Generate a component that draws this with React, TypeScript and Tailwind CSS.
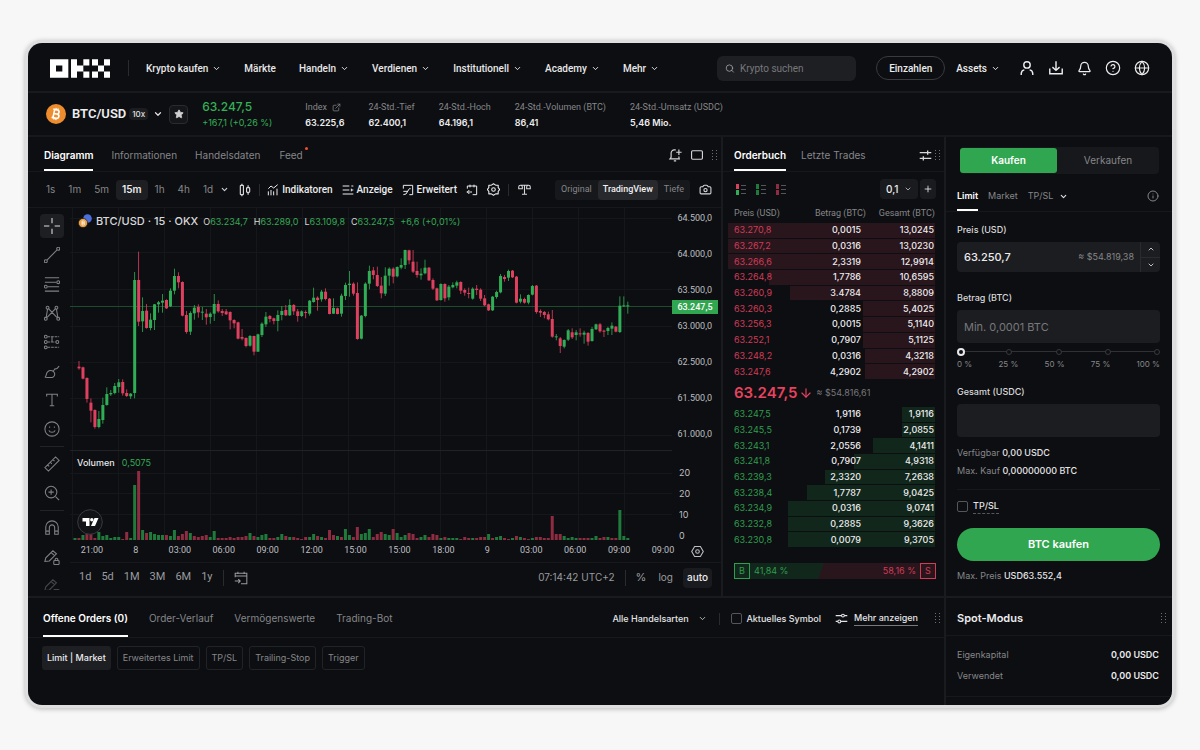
import React, { useState } from 'react';
import { ArrowDown, Bell, Camera, ChevronDown, ChevronUp, CircleHelp, ExternalLink, Globe, Info, Plus, Search, Star } from 'lucide-react';

type Candle = [open: number, close: number, high: number, low: number];

const NAV = [
  { label: 'Krypto kaufen', menu: true },
  { label: 'Märkte', menu: false },
  { label: 'Handeln', menu: true },
  { label: 'Verdienen', menu: true },
  { label: 'Institutionell', menu: true },
  { label: 'Academy', menu: true },
  { label: 'Mehr', menu: true },
];

const STATS = [
  { label: 'Index', value: '63.225,6', link: true },
  { label: '24-Std.-Tief', value: '62.400,1' },
  { label: '24-Std.-Hoch', value: '64.196,1' },
  { label: '24-Std.-Volumen (BTC)', value: '86,41' },
  { label: '24-Std.-Umsatz (USDC)', value: '5,46 Mio.' },
];

const ASKS = [
  ['63.270,8', '0,0015', '13,0245', 100],
  ['63.267,2', '0,0316', '13,0230', 100],
  ['63.266,6', '2,3319', '12,9914', 100],
  ['63.264,8', '1,7786', '10,6595', 80],
  ['63.260,9', '3.4784', '8,8809', 70],
  ['63.260,3', '0,2885', '5,4025', 35],
  ['63.256,3', '0,0015', '5,1140', 35],
  ['63.252,1', '0,7907', '5,1125', 35],
  ['63.248,2', '0,0316', '4,3218', 34],
  ['63.247,6', '4,2902', '4,2902', 34],
] as const;

const BIDS = [
  ['63.247,5', '1,9116', '1,9116', 16],
  ['63.245,5', '0,1739', '2,0855', 16],
  ['63.243,1', '2,0556', '4,1411', 30],
  ['63.241,8', '0,7907', '4,9318', 39],
  ['63.239,3', '2,3320', '7,2638', 53],
  ['63.238,4', '1,7787', '9,0425', 62],
  ['63.234,9', '0,0316', '9,0741', 71],
  ['63.232,8', '0,2885', '9,3626', 71],
  ['63.230,8', '0,0079', '9,3705', 71],
] as const;

// open, close, high, low as distances from the top of the price pane (a third of a pixel each)
const CANDLES: Candle[] = [
  [395, 400, 378, 404], [397, 431, 395, 433], [429, 492, 427, 503], [503, 527, 490, 562], [525, 576, 523, 581],
  [576, 552, 528, 580], [555, 510, 488, 566], [510, 477, 457, 512], [478, 474, 465, 483], [474, 453, 444, 478],
  [456, 442, 432, 473], [441, 475, 433, 482], [474, 483, 463, 486], [484, 476, 474, 492], [474, 135, 111, 490],
  [135, 260, 50, 273], [259, 228, 187, 291], [227, 279, 207, 281], [279, 254, 235, 286], [255, 208, 207, 285],
  [208, 202, 198, 233], [203, 197, 177, 233], [195, 220, 193, 222], [214, 167, 160, 216], [167, 123, 101, 178],
  [123, 142, 112, 160], [141, 242, 139, 244], [240, 291, 228, 296], [290, 234, 229, 300], [235, 218, 210, 254],
  [216, 232, 208, 248], [232, 230, 216, 255], [236, 247, 222, 269], [246, 236, 232, 266], [236, 207, 177, 258],
  [207, 229, 196, 233], [228, 234, 222, 243], [229, 238, 222, 240], [231, 256, 229, 283], [255, 265, 253, 280],
  [262, 311, 260, 313], [306, 311, 282, 316], [309, 333, 307, 337], [332, 303, 300, 335], [303, 350, 302, 361],
  [350, 298, 296, 351], [300, 266, 262, 306], [268, 245, 231, 276], [243, 252, 240, 262], [250, 258, 248, 268],
  [258, 240, 226, 289], [240, 228, 213, 256], [225, 241, 210, 243], [241, 210, 193, 243], [210, 229, 207, 240],
  [229, 243, 222, 260], [243, 229, 226, 246], [231, 234, 226, 250], [236, 197, 195, 242], [201, 188, 158, 203],
  [188, 195, 184, 227], [193, 170, 165, 200], [170, 192, 160, 196], [191, 237, 189, 238], [236, 219, 190, 237],
  [220, 237, 218, 238], [236, 182, 176, 245], [183, 150, 143, 195], [150, 146, 108, 185], [146, 176, 142, 182],
  [174, 312, 142, 314], [311, 242, 240, 313], [243, 146, 142, 247], [146, 108, 92, 163], [106, 120, 96, 133],
  [120, 153, 95, 156], [152, 175, 126, 190], [176, 122, 97, 183], [122, 101, 97, 152], [101, 125, 97, 145],
  [124, 96, 94, 127], [98, 90, 70, 103], [90, 45, 44, 102], [46, 76, 44, 88], [80, 110, 45, 114],
  [108, 120, 80, 128], [121, 116, 100, 134], [115, 98, 74, 118], [98, 136, 96, 138], [135, 161, 130, 165],
  [160, 196, 158, 198], [195, 147, 145, 197], [147, 190, 145, 200], [187, 155, 150, 196], [157, 150, 142, 160],
  [152, 142, 137, 160], [141, 167, 139, 177], [165, 173, 160, 182], [174, 176, 158, 190], [191, 161, 157, 194],
  [161, 165, 150, 180], [164, 191, 160, 198], [190, 211, 180, 213], [208, 226, 206, 228], [226, 185, 183, 228],
  [186, 171, 167, 191], [172, 123, 117, 175], [126, 132, 120, 140], [128, 108, 104, 138], [107, 127, 105, 129],
  [125, 203, 123, 205], [200, 191, 178, 205], [192, 203, 188, 206], [203, 180, 178, 208], [179, 153, 150, 181],
  [152, 231, 150, 236], [228, 233, 223, 246], [231, 240, 228, 250], [238, 253, 230, 256], [252, 305, 225, 308],
  [307, 304, 297, 316], [310, 333, 306, 354], [335, 315, 313, 340], [314, 286, 282, 318], [292, 307, 280, 312],
  [300, 292, 285, 316], [295, 297, 280, 305], [299, 293, 287, 326], [294, 320, 291, 332], [318, 282, 276, 320],
  [283, 268, 266, 285], [268, 289, 264, 293], [287, 290, 284, 306], [288, 279, 275, 300], [281, 272, 262, 300],
  [275, 290, 273, 292], [291, 212, 184, 294], [214, 211, 184, 216], [214, 211, 200, 236],
];

// negative = falling bar
const VOLUMES = [
  2, -2, 5, -6, -6, -2, 8, 4, 5, 2, 3, 3, -1, -8, 2, 55, -69, 10, -7, 8,
  6, 5, 5, -5, 4, 10, -4, -6, -9, 7, -4, -3, -4, -5, 3, 9, -2, -2, -2, -3,
  -2, -3, -3, -4, 7, -4, 3, 5, 6, -2, -2, 3, 6, -4, 3, -3, -2, -1, -3, 3,
  6, -4, 3, -2, -10, -5, 4, -3, 11, 5, -3, -13, 6, 7, 11, -3, -6, -8, 6, 5,
  -11, 7, 3, 5, -7, -6, -2, 3, 5, -3, -6, -5, 2, -3, 2, 2, 2, -1, -3, -2,
  2, -2, -3, -3, 6, -2, 3, 4, -2, -1, 2, -4, 3, -2, -1, 2, -3, -3, -2, -2,
  -24, -6, -6, 4, 2, 3, 2, -2, -2, -2, 2, 4, -2, -3, 3, -2, -2, 30, 4, 2,
];

const PRICE_TICKS = ['64.500,0', '64.000,0', '63.500,0', '63.000,0', '62.500,0', '61.500,0', '61.000,0'];
const TIME_TICKS = ['21:00', '8', '03:00', '06:00', '09:00', '12:00', '15:00', '15:00', '18:00', '9', '03:00', '06:00', '09:00', '09:00'];

const BAR_STEP = 3.977;

interface IconProps {
  size?: number;
  weight?: number;
  children: React.ReactNode;
}

const Icon = ({ size = 16, weight = 1.5, children }: IconProps) => (
  <svg
    width={size}
    height={size}
    viewBox="0 0 18 18"
    fill="none"
    stroke="currentColor"
    strokeWidth={weight}
    className="shrink-0"
    aria-hidden="true"
  >
    {children}
  </svg>
);

const DragDots = () => (
  <svg width="5" height="11" viewBox="0 0 5 11" fill="#6b6d72" className="shrink-0" aria-hidden="true">
    {[0, 3, 6, 9].map(y => (
      <g key={y}>
        <rect x="0" y={y} width="1" height="1" />
        <rect x="4" y={y} width="1" height="1" />
      </g>
    ))}
  </svg>
);

const Logo = () => (
  <svg width="60" height="19" viewBox="0 0 180 56" fill="#fff" role="img" aria-label="OKX">
    <path fillRule="evenodd" d="M0 0h55v56H0zM18 19v18h19V19z" />
    <path d="M63 0h18v19h19v18H81v19H63zM100 0h18v19h-18zM100 37h18v19h-18z" />
    <path d="M126 0h18v19h-18zM162 0h18v19h-18zM144 19h18v18h-18zM126 37h18v19h-18zM162 37h18v19h-18z" />
  </svg>
);

const BitcoinBadge = () => (
  <svg width="20" height="20" viewBox="0 0 20 20" aria-hidden="true" className="shrink-0">
    <circle cx="10" cy="10" r="10" fill="#ee8d2d" />
    <g fill="none" stroke="#fff" strokeWidth="1.6" transform="rotate(12 10 10)">
      <path d="M7.8 5.8v8.4M6.4 5.8h4.2a2 2 0 0 1 0 4.1H7.8M10.6 9.9h.6a2.15 2.15 0 0 1 0 4.3H6.4" />
      <path d="M9 4v2M11 4v2M9 14v2M11 14v2" strokeWidth="1.1" />
    </g>
  </svg>
);

const Header = () => (
  <header className="flex h-[50px] items-center border-b-2 border-[#191a1e] px-[22px] pt-[2px] font-['Roboto','Liberation_Sans',sans-serif]">
    <a href="#home"><Logo /></a>
    <span className="ml-[18px] mr-[17px] h-4 w-px bg-[#2a2b2f]" />
    <nav className="flex items-center gap-[23px] whitespace-nowrap text-[10px] font-medium text-[#e8e8ea]">
      {NAV.map(item => (
        <a key={item.label} href="#nav" className="flex items-center gap-1">
          {item.label}
          {item.menu && <ChevronDown size={9} strokeWidth={2.5} />}
        </a>
      ))}
    </nav>
    <label className="ml-auto flex h-[25px] w-[139px] items-center gap-[5px] rounded-md bg-[#1e1f22] px-2 text-[#a5a6aa]">
      <Search size={11} />
      <input
        type="search"
        aria-label="Suche"
        placeholder="Krypto suchen"
        className="w-full min-w-0 bg-transparent text-[10px] outline-none placeholder:text-[#77787c]"
      />
    </label>
    <button className="ml-5 h-6 w-[69px] rounded-full border border-[#3a3b3f] text-[10px] font-medium text-[#ececee]">Einzahlen</button>
    <button className="ml-[11px] flex items-center gap-1 text-[10px] font-medium text-[#ececee]">
      Assets <ChevronDown size={9} strokeWidth={2.5} />
    </button>
    <div className="ml-[19px] flex items-center gap-[13px] text-[#ececee]">
      <button aria-label="Konto">
        <Icon weight={1.6}><circle cx="9" cy="5.5" r="3.6" /><path d="M2.5 17v-1.5a4.5 4.5 0 0 1 3.5-4.4M15.5 17v-1.5a4.5 4.5 0 0 0-3.5-4.4" /></Icon>
      </button>
      <button aria-label="Download">
        <Icon weight={1.6}><path d="M9 1.5v10M5 8l4 3.7L13 8M2 9.5v6h14v-6" /></Icon>
      </button>
      <button aria-label="Benachrichtigungen"><Bell size={15} strokeWidth={2} /></button>
      <button aria-label="Hilfe"><CircleHelp size={16} strokeWidth={1.8} /></button>
      <button aria-label="Sprache"><Globe size={16} strokeWidth={1.8} /></button>
    </div>
  </header>
);

const Ticker = () => (
  <section className="flex h-11 items-center whitespace-nowrap border-b-2 border-[#17181c] pl-[18px]">
    <BitcoinBadge />
    <h1 className="ml-[6px] font-['Roboto','Liberation_Sans',sans-serif] text-[13px] font-semibold text-[#ededef]">BTC/USD</h1>
    <span className="ml-[3px] rounded-sm bg-[#1c1d20] px-[3px] text-[8px] font-medium leading-3 text-[#e0e0e2]">10x</span>
    <button aria-label="Paar wählen" className="ml-[5px] text-[#e0e0e2]"><ChevronDown size={10} strokeWidth={3} /></button>
    <button aria-label="Favorit" className="ml-[6px] flex size-[19px] items-center justify-center rounded border border-[#2a2b2f] bg-[#151619] text-[#d0d0d2]">
      <Star size={10} fill="currentColor" />
    </button>
    <div className="ml-[14px] w-[103px] pt-px text-[#35b057]">
      <div className="text-[12px] font-medium leading-4">63.247,5</div>
      <div className="text-[9px] leading-4">+167,1 (+0,26 %)</div>
    </div>
    <dl className="flex gap-6 pt-[2px] text-[9px] leading-4">
      {STATS.map(stat => (
        <div key={stat.label}>
          <dt className="flex items-center gap-[5px] font-['Roboto','Liberation_Sans',sans-serif] text-[#85868a]">
            {stat.label}
            {stat.link && <ExternalLink size={9} />}
          </dt>
          <dd className="font-semibold text-[#ececee]">{stat.value}</dd>
        </div>
      ))}
    </dl>
  </section>
);

const ChartTabs = () => (
  <div className="flex h-[35px] items-stretch border-b border-[#17181c] pl-4 pr-1 text-[10px] text-[#85868a]">
    <button className="border-b-2 border-white pt-1 font-semibold text-white">Diagramm</button>
    <button className="ml-[18px] pt-[2px]">Informationen</button>
    <button className="ml-[18px] pt-[2px]">Handelsdaten</button>
    <button className="relative ml-[19px] pt-[2px]">
      Feed
      <span className="absolute -right-[5px] top-[10px] size-[3px] rounded-full bg-[#f04a35]" />
    </button>
    <div className="ml-auto flex items-center gap-2 pt-[2px] text-[#d5d5d8]">
      <button aria-label="Alarm">
        <Icon size={14}><path d="M10 2.5H8a4 4 0 0 0-4 4V12l-1.5 2h12L14 12v-1M7.5 16.5h3M14 2v7M10.500 5.500h7" /></Icon>
      </button>
      <button aria-label="Vollbild">
        <Icon size={14}><rect x="2" y="3.5" width="14" height="11" rx="1.5" /></Icon>
      </button>
      <DragDots />
    </div>
  </div>
);

const ChartToolbar = () => {
  const [interval, setActiveInterval] = useState('15m');
  const [mode, setMode] = useState('TradingView');

  return (
    <div className="flex h-9 items-center whitespace-nowrap border-b border-[#17181c] pl-3 pr-[9px] text-[10px] text-[#85868a]">
      <div className="flex gap-px">
        {['1s', '1m', '5m', '15m', '1h', '4h', '1d'].map(item => (
          <button
            key={item}
            onClick={() => setActiveInterval(item)}
            className={item === interval ? 'h-5 rounded-sm bg-[#1e1f22] px-[6px] font-semibold text-[#ececee]' : 'h-5 px-[6px]'}
          >
            {item}
          </button>
        ))}
      </div>
      <button aria-label="Weitere Intervalle" className="ml-px text-[#d0d0d2]"><ChevronDown size={9} strokeWidth={3} /></button>
      <button aria-label="Kerzen" className="ml-[9px] text-[#d8d8da]">
        <Icon size={14}><rect x="3" y="3" width="4" height="12" rx="1" /><path d="M5 1v2M5 15v2M13 3v3M13 12v3" /><rect x="11" y="6" width="4" height="6" rx="1" /></Icon>
      </button>
      <span className="mx-[7px] h-3 w-px bg-[#2a2b2f]" />
      <div className="flex items-center gap-[9px] font-['Roboto','Liberation_Sans',sans-serif] font-medium text-[#ececee]">
        <button className="flex items-center gap-[3px]">
          <Icon size={12}><path d="M2 7l4-4 4 3 6-5M2 11v6M6 9v8M10 11v6M15 7v10" /></Icon>
          Indikatoren
        </button>
        <button className="flex items-center gap-[3px]">
          <Icon size={12}><path d="M1 3h10M1 9h10M1 15h16M14 3h3M14 9h3M14 7v4" /></Icon>
          Anzeige
        </button>
        <button className="flex items-center gap-[3px]">
          <Icon size={12}><path d="M2 7V2h14v14h-5M2 16l4-1 5-8h2M2 11h7" /></Icon>
          Erweitert
        </button>
        <button aria-label="Replay">
          <Icon size={12}><path d="M2 7V3h14v13h-6M6 1v4M12 1v4M9 12H1M5 9l-3 3 3 3" /></Icon>
        </button>
        <button aria-label="Einstellungen">
          <Icon size={13}><path d="M9 1l3 2h3.5v3.5L17.5 9l-2 2.5V15H12l-3 2-3-2H2.5v-3.5L.5 9l2-2.5V3H6z" strokeLinejoin="round" /><circle cx="9" cy="9" r="2.5" /></Icon>
        </button>
      </div>
      <span className="ml-2 mr-[9px] h-3 w-px bg-[#2a2b2f]" />
      <button aria-label="Vergleichen" className="text-[#d8d8da]">
        <Icon size={13}><path d="M9 3v12M5.5 15.5h7M3 3h12M1 5.5C1 4 2 3 3.5 3S6 4 6 5.500V8H1zM12 5.500C12 4 13 3 14.500 3S17 4 17 5.500V8h-5z" /></Icon>
      </button>
      <div className="ml-auto flex h-5 items-center rounded-[3px] bg-[#17181b] font-['Roboto','Liberation_Sans',sans-serif] text-[9px]">
        {['Original', 'TradingView', 'Tiefe'].map(item => (
          <button
            key={item}
            onClick={() => setMode(item)}
            className={item === mode ? 'h-5 rounded-sm bg-[#28292c] px-[5px] font-medium text-[#f0f0f2]' : 'h-5 px-[6px]'}
          >
            {item}
          </button>
        ))}
      </div>
      <button aria-label="Screenshot" className="ml-[9px] text-[#d8d8da]"><Camera size={13} /></button>
    </div>
  );
};

const TOOLS: { name: string; glyph: React.ReactNode }[] = [
  { name: 'Fadenkreuz', glyph: <path d="M9 0v6M9 12v6M0 9h6M12 9h6" /> },
  { name: 'Trendlinie', glyph: <><path d="M3.3 14.7L14.7 3.3" /><circle cx="2" cy="16" r="1.7" /><circle cx="16" cy="2" r="1.7" /></> },
  { name: 'Fibonacci', glyph: <><path d="M1 2h16M1 7h13M4 12h13M1 17h16" /><circle cx="16" cy="7" r="1.6" /><circle cx="2" cy="12" r="1.6" /></> },
  { name: 'Muster', glyph: <><path d="M2.5 14L4 4.5M5 4l9.5 10M15.5 14L14 4.5M13 4L3.5 14M5 4l4 4 4-4" /><circle cx="4" cy="3" r="1.6" /><circle cx="14" cy="3" r="1.6" /><circle cx="2" cy="15.5" r="1.6" /><circle cx="16" cy="15.5" r="1.6" /></> },
  { name: 'Prognose', glyph: <><path d="M4 3h13M4 9h9M4 15h13" strokeDasharray="3 1" /><circle cx="2" cy="3" r="1.6" /><circle cx="2" cy="9" r="1.6" /><circle cx="2" cy="15" r="1.6" /><circle cx="15" cy="9" r="1.6" /><path d="M9 3v6" /></> },
  { name: 'Pinsel', glyph: <path d="M1 16c2-1 1-4 3-6 2-2 5-2 7 0s1 5-1 6-6 0-9 0zM10.5 9l2-2.5c1 .5 2 .5 4.5-3" /> },
  { name: 'Text', glyph: <path d="M3 5V2.5h12V5M9 2.5v13M6.5 15.5h5" /> },
  { name: 'Emoji', glyph: <><circle cx="9" cy="9" r="8" /><path d="M5.5 10.5c1 3 6 3 7 0M6.3 6.2v1.5M11.7 6.2v1.5" /></> },
  { name: 'Lineal', glyph: <path d="M1 13L13 1l4 4L5 17zM4 10l1.8 1.8M7 7l1.8 1.8M10 4l1.8 1.8" /> },
  { name: 'Zoom', glyph: <><circle cx="8" cy="8" r="6.5" /><path d="M13 13l4 4M8 5v6M5 8h6" /></> },
  { name: 'Magnet', glyph: <path d="M2 16V8a7 7 0 0 1 14 0v8h-4V8.5a3 3 0 0 0-6 0V16zM2 12.5h4M12 12.5h4" /> },
  { name: 'Zeichenmodus', glyph: <><path d="M1 14l1-4 8-8 4 3.5-8 8zM8 4l4 3.5" /><rect x="11" y="13" width="6" height="4.5" rx="1" /><path d="M12.5 13v-1a1.5 1.5 0 0 1 3 0v1" /></> },
  { name: 'Sperren', glyph: <><path d="M1 14l1-4 8-8 4 3.5-8 8zM8 4l4 3.5" /><rect x="11" y="13" width="6" height="4.5" rx="1" /></> },
];

const DrawingTools = () => (
  <div className="flex w-[42px] shrink-0 flex-col items-center gap-[5px] overflow-hidden pl-[6px] pt-[6px] text-[#808185]">
    {TOOLS.map((tool, i) => (
      <React.Fragment key={tool.name}>
        {(i === 8 || i === 10) && <span className="h-px w-6 shrink-0 bg-[#222327]" />}
        <button
          aria-label={tool.name}
          className={
            i === 0
              ? 'flex size-6 shrink-0 items-center justify-center rounded bg-[#1e1f22] text-[#e0e0e2]'
              : i === 12
                ? 'flex h-4 w-6 shrink-0 items-start justify-center overflow-hidden pt-1 opacity-50'
                : 'flex size-6 shrink-0 items-center justify-center'
          }
        >
          <Icon size={16} weight={1.2}>{tool.glyph}</Icon>
        </button>
      </React.Fragment>
    ))}
  </div>
);

const ChartPlot = () => (
  <svg viewBox="0 0 602 332" preserveAspectRatio="none" className="block h-[332px] w-full" aria-label="BTC/USD Kursverlauf">
    <g stroke="#15171a" strokeWidth="1">
      {Array.from({ length: 13 }, (_, i) => (
        <line key={i} x1={2.5 + i * 46} x2={2.5 + i * 46} y1="0" y2="332" />
      ))}
      {[10, 44, 81, 118, 154, 190, 227, 265, 285, 306].map(y => (
        <line key={y} x1="0" x2="602" y1={y + 0.5} y2={y + 0.5} />
      ))}
    </g>
    <line x1="0" x2="602" y1="242.5" y2="242.5" stroke="#202226" />
    <line x1="0" x2="602" y1="98.5" y2="98.5" stroke="#1b4d2d" />
    {CANDLES.map(([open, close, high, low], i) => {
      const x = 9 + i * BAR_STEP;
      const color = close < open ? '#2fae56' : '#e0405f';
      const top = 27 + Math.min(open, close) / 3;
      return (
        <g key={i} fill={color}>
          <rect x={x - 0.4} y={27 + high / 3} width="0.8" height={(low - high) / 3} />
          <rect x={x - 1.5} y={top} width="3" height={Math.max(1, Math.abs(close - open) / 3)} />
        </g>
      );
    })}
    {VOLUMES.map((volume, i) => (
      <rect
        key={i}
        x={3.5 + i * BAR_STEP}
        y={332 - Math.abs(volume)}
        width="3"
        height={Math.abs(volume)}
        fill={volume > 0 ? '#1f7a3c' : '#8f2c41'}
      />
    ))}
  </svg>
);

const PriceChart = () => (
  <div className="flex min-w-0 flex-1 flex-col">
    <div className="flex h-[332px]">
      <div className="relative min-w-0 flex-1">
        <ChartPlot />
        <div className="absolute left-2 top-[5px] flex items-center whitespace-nowrap text-[9px] text-[#35a855]">
          <svg width="14" height="14" viewBox="0 0 14 14" aria-hidden="true">
            <circle cx="9.5" cy="4.5" r="4.3" fill="#4a6fdc" />
            <circle cx="5" cy="9" r="4.6" fill="#e9a04a" stroke="#0d0e11" strokeWidth=".6" />
            <path d="M4 7v4M4 7h1.5a1 1 0 0 1 0 2H4h1.7a1 1 0 0 1 0 2H4" stroke="#fff" strokeWidth=".7" fill="none" />
          </svg>
          <h2 className="ml-1 mr-[5px] text-[11px] font-medium text-[#d8d8da]">BTC/USD · 15 · OKX</h2>
          <span className="mr-[6px]"><span className="text-[#d8d8da]">O</span>63.234,7</span>
          <span className="mr-[6px]"><span className="text-[#d8d8da]">H</span>63.289,0</span>
          <span className="mr-[6px]"><span className="text-[#d8d8da]">L</span>63.109,8</span>
          <span className="mr-[6px]"><span className="text-[#d8d8da]">C</span>63.247,5</span>
          <span>+6,6 (+0,01%)</span>
        </div>
        <div className="absolute left-[7px] top-[248px] text-[9px] leading-[14px] text-[#35a855]">
          <span className="mr-[7px] font-medium text-[#e8e8ea]">Volumen</span>0,5075
        </div>
        <svg width="26" height="26" viewBox="0 0 26 26" className="absolute left-[7px] top-[301px]" aria-hidden="true">
          <circle cx="13" cy="13" r="12.3" fill="#121316" stroke="#3a3b3f" />
          <path d="M5.5 9h7v8H9v-4.5H5.5zM17.5 9h4L18 17h-4z" fill="#fff" />
          <circle cx="14.8" cy="10.8" r="1.7" fill="#fff" />
        </svg>
      </div>
      <div className="relative w-[49px] shrink-0 text-[9px] text-[#bdbec2]">
        <ul className="flex flex-col gap-4 font-['Roboto','Liberation_Sans',sans-serif]">
          {PRICE_TICKS.map(tick => <li key={tick} className="pr-[9px] text-right leading-5">{tick}</li>)}
        </ul>
        <ul className="mt-[19px] flex flex-col gap-px pl-[7px]">
          {['20', '20', '10', '0'].map((tick, i) => <li key={i} className="h-5 leading-5">{tick}</li>)}
        </ul>
        <span className="absolute left-0 top-[92px] w-[46px] bg-[#31a650] text-center font-['Roboto','Liberation_Sans',sans-serif] font-medium leading-[14px] text-white">63.247,5</span>
      </div>
    </div>
    <div className="flex h-[23px] items-center border-b border-[#17181c] pr-[17px] text-[9px] text-[#bdbec2]">
      <ol className="grid flex-1 grid-cols-14 text-center font-['Roboto','Liberation_Sans',sans-serif]">
        {TIME_TICKS.map((tick, i) => <li key={i}>{tick}</li>)}
      </ol>
      <button aria-label="Achse einstellen" className="ml-[6px]">
        <Icon size={13}><path d="M5 2h8l4 7-4 7H5L1 9z" /><circle cx="9" cy="9" r="2.5" /></Icon>
      </button>
    </div>
    <div className="flex h-[33px] items-center gap-[10px] whitespace-nowrap pb-1 pl-[9px] pr-[9px] text-[10px] text-[#9a9b9f]">
      <div className="flex gap-[10px] font-['Roboto','Liberation_Sans',sans-serif] text-[11px]">
        {['1d', '5d', '1M', '3M', '6M', '1y'].map(range => <button key={range}>{range}</button>)}
      </div>
      <span className="h-4 w-px bg-[#2a2b2f]" />
      <button aria-label="Datum wählen">
        <Icon size={14} weight={1.3}><path d="M1.5 8V3h15v13.5H9M1.5 6.5h15M5 1v3M13 1v3M1 13h7M5.5 10.5L8 13l-2.5 2.5" /></Icon>
      </button>
      <span className="ml-auto">07:14:42 UTC+2</span>
      <span className="h-4 w-px bg-[#2a2b2f]" />
      <button className="text-[11px]">%</button>
      <button className="ml-[2px]">log</button>
      <button className="h-5 rounded-sm bg-[#1a1b1e] px-1 font-medium text-[#ececee]">auto</button>
    </div>
  </div>
);

interface BookRowProps {
  row: readonly [string, string, string, number];
  side: 'ask' | 'bid';
}

const BookRow = ({ row, side }: BookRowProps) => {
  const fill = side === 'ask' ? '#29151c' : '#12271b';
  return (
    <tr style={{ backgroundImage: `linear-gradient(to left, ${fill} ${row[3]}%, transparent ${row[3]}%)` }}>
      <td className={side === 'ask' ? 'pl-[6px] text-[#d03c57]' : 'pl-[6px] text-[#2f9d4f]'}>{row[0]}</td>
      <td className="pr-[5px] text-right font-medium text-[#ececee]">{row[1]}</td>
      <td className="pr-px text-right font-medium text-[#ececee]">{row[2]}</td>
    </tr>
  );
};

const BookCols = () => (
  <colgroup>
    <col className="w-[60px]" />
    <col />
    <col className="w-[69px]" />
  </colgroup>
);

const BookIcon = ({ top, bottom }: { top: string; bottom: string }) => (
  <svg width="11" height="11" viewBox="0 0 11 11" aria-hidden="true">
    <rect width="3" height="5" fill={top} />
    <rect y="6" width="3" height="5" fill={bottom} />
    <path d="M5 1.5H10M5 5.5H10M5 9.5H10" stroke="#55565a" />
  </svg>
);

const OrderBook = () => (
  <section className="w-[223px] shrink-0 border-l-2 border-[#1a1b1f]">
    <div className="flex h-[35px] items-stretch border-b border-[#17181c] pl-[11px] pr-1 text-[10px] text-[#85868a]">
      <button className="border-b-2 border-white pt-1 font-semibold text-white">Orderbuch</button>
      <button className="ml-[15px] pt-[2px]">Letzte Trades</button>
      <div className="ml-auto flex items-center gap-[3px] pt-[2px] text-[#d8d8da]">
        <button aria-label="Filter">
          <Icon size={13} weight={1.8}><path d="M1 5h16M1 13h16M12 2v6M6 10v6" /></Icon>
        </button>
        <DragDots />
      </div>
    </div>
    <div className="flex h-[34px] items-center pl-[13px] pr-2">
      <div className="flex gap-[9px]">
        <button aria-label="Beide Seiten"><BookIcon top="#d9405c" bottom="#2fae56" /></button>
        <button aria-label="Nur Käufe"><BookIcon top="#1f7a3c" bottom="#1f7a3c" /></button>
        <button aria-label="Nur Verkäufe"><BookIcon top="#8f2c41" bottom="#8f2c41" /></button>
      </div>
      <label className="relative ml-auto flex h-5 w-[38px] items-center rounded-sm bg-[#1a1b1e] text-[#ececee]">
        <select aria-label="Schrittweite" defaultValue="0,1" className="w-full appearance-none bg-transparent pl-[6px] text-[10px] font-medium outline-none">
          <option>0,1</option>
          <option>1</option>
        </select>
        <ChevronDown size={8} className="pointer-events-none absolute right-[6px]" />
      </label>
      <button aria-label="Hinzufügen" className="ml-[2px] flex h-5 w-4 items-center justify-center rounded-sm bg-[#1a1b1e] text-[#ececee]"><Plus size={10} /></button>
    </div>
    <table className="ml-[5px] h-[174px] w-[207px] table-fixed border-separate border-spacing-x-0 border-spacing-y-px text-[9px] leading-[14px]">
      <BookCols />
      <thead className="font-['Roboto','Liberation_Sans',sans-serif] text-[#85868a]">
        <tr className="h-[15px] whitespace-nowrap align-top leading-3">
          <th className="pl-[6px] text-left font-normal">Preis (USD)</th>
          <th className="text-right font-normal">Betrag (BTC)</th>
          <th className="text-right font-normal">Gesamt (BTC)</th>
        </tr>
      </thead>
      <tbody>
        {ASKS.map(row => <BookRow key={row[0]} row={row} side="ask" />)}
      </tbody>
    </table>
    <div className="flex h-[26px] items-center pl-[11px]">
      <strong className="text-[15px] font-semibold text-[#e8425f]">63.247,5</strong>
      <ArrowDown size={14} className="ml-px text-[#e8425f]" />
      <span className="ml-1 text-[9px] text-[#77787c]">≈ $54.816,61</span>
    </div>
    <table className="ml-[5px] h-[142px] w-[207px] table-fixed border-separate border-spacing-x-0 border-spacing-y-px text-[9px] leading-[14px]">
      <BookCols />
      <tbody>
        {BIDS.map(row => <BookRow key={row[0]} row={row} side="bid" />)}
      </tbody>
    </table>
    <div className="ml-[11px] mr-2 mt-[15px] flex h-4 items-stretch text-[9px] leading-4">
      <span className="w-4 border border-[#2f9d4f] bg-[#12271b] text-center leading-[14px] text-[#2f9d4f]">B</span>
      <div className="flex flex-1 justify-between bg-[linear-gradient(110deg,#12271b_42%,#29151c_42%)] px-1">
        <span className="text-[#2f9d4f]">41,84 %</span>
        <span className="text-[#d03c57]">58,16 %</span>
      </div>
      <span className="w-4 border border-[#d03c57] bg-[#29151c] text-center leading-[14px] text-[#d03c57]">S</span>
    </div>
  </section>
);

const OrdersPanel = () => (
  <section className="flex-1 whitespace-nowrap border-t-2 border-[#1a1b1f] text-[10px] text-[#85868a]">
    <div className="flex h-10 items-stretch border-b border-[#17181c] pl-[15px] pr-1">
      <button className="border-b-2 border-white pt-1 font-semibold text-white">Offene Orders (0)</button>
      <button className="ml-[21px] pt-[2px]">Order-Verlauf</button>
      <button className="ml-[21px] pt-[2px]">Vermögenswerte</button>
      <button className="ml-[21px] pt-[2px]">Trading-Bot</button>
      <div className="ml-auto flex items-center pt-[2px] text-[9px] font-medium text-[#e4e4e6]">
        <label className="relative flex items-center">
          <select aria-label="Handelsart" className="w-[95px] appearance-none bg-transparent outline-none">
            <option>Alle Handelsarten</option>
            <option>Spot</option>
          </select>
          <ChevronDown size={9} className="pointer-events-none absolute right-0" />
        </label>
        <span className="ml-3 mr-[11px] h-3 w-px bg-[#2a2b2f]" />
        <label className="flex items-center gap-1">
          <input type="checkbox" className="size-[11px] appearance-none rounded-[2px] border border-[#55565a] checked:bg-[#31a650]" />
          Aktuelles Symbol
        </label>
        <button className="ml-[14px] flex items-center gap-[6px]">
          <Icon size={13}><path d="M1 5h8M13 5h4M1 13h3M8 13h9" /><circle cx="11" cy="5" r="2" /><circle cx="6" cy="13" r="2" /></Icon>
          <span className="border-b border-[#77787c]">Mehr anzeigen</span>
        </button>
        <span className="ml-[17px]"><DragDots /></span>
      </div>
    </div>
    <div className="flex gap-[6px] pl-[14px] pt-2 text-[9px]">
      {['Limit | Market', 'Erweitertes Limit', 'TP/SL', 'Trailing-Stop', 'Trigger'].map((chip, i) => (
        <button
          key={chip}
          className={i === 0 ? 'h-6 rounded-[3px] bg-[#1e1f22] px-[5px] font-medium text-[#ececee]' : 'h-6 rounded-[3px] border border-[#222327] px-[5px]'}
        >
          {chip}
        </button>
      ))}
    </div>
  </section>
);

const OrderForm = () => {
  const [amount, setAmount] = useState(0);

  return (
    <form className="flex h-[461px] flex-col border-b-2 border-[#1a1b1f] text-[9px] text-[#85868a]" onSubmit={e => e.preventDefault()}>
      <div className="ml-[14px] mr-[13px] mt-[10px] flex h-[27px] rounded-[4px] bg-[#17181b] text-[10px]">
        <button type="button" className="my-px w-[97px] rounded-[3px] bg-[#31a650] font-semibold text-white">Kaufen</button>
        <button type="button" className="flex-1">Verkaufen</button>
      </div>
      <div className="mt-[7px] flex h-[31px] items-stretch gap-[10px] border-b border-[#17181c] pl-[11px] pr-[13px]">
        <button type="button" className="border-b-2 border-white pt-[2px] font-semibold text-white">Limit</button>
        <button type="button">Market</button>
        <button type="button" className="flex items-center gap-[6px]">TP/SL <ChevronDown size={9} strokeWidth={3} className="text-[#e0e0e2]" /></button>
        <span className="ml-auto flex items-center"><Info size={12} /></span>
      </div>
      <div className="flex flex-col pl-[11px] pr-3">
        <label htmlFor="price" className="mt-[10px] font-medium leading-4 text-[#d8d8da]">Preis (USD)</label>
        <div className="mt-1 flex h-[30px] items-center rounded-[4px] bg-[#1c1d20]">
          <input id="price" defaultValue="63.250,7" className="w-20 flex-1 bg-transparent pl-[7px] text-[11px] font-medium text-[#ececee] outline-none" />
          <span className="mr-[6px] text-[9px]">≈ $54.819,38</span>
          <div className="flex h-full w-5 flex-col border-l border-[#2a2b2f] text-[#c0c0c3]">
            <button type="button" aria-label="Höher" className="flex flex-1 items-center justify-center border-b border-[#2a2b2f]"><ChevronUp size={8} strokeWidth={3} /></button>
            <button type="button" aria-label="Niedriger" className="flex flex-1 items-center justify-center"><ChevronDown size={8} strokeWidth={3} /></button>
          </div>
        </div>
        <label htmlFor="amount" className="mt-[18px] font-medium leading-4 text-[#d8d8da]">Betrag (BTC)</label>
        <input id="amount" placeholder="Min. 0,0001 BTC" className="mt-1 h-[33px] rounded-[4px] bg-[#1c1d20] px-[7px] text-[11px] outline-none placeholder:text-[#77787c]" />
        <div className="relative mt-1 flex h-[9px] items-center justify-between">
          <span className="absolute inset-x-1 top-1 h-px bg-[#303135]" />
          {[0, 25, 50, 75, 100].map(stop => <span key={stop} className="relative size-[6px] rounded-full border border-[#38393d] bg-[#0d0e11]" />)}
          <input
            type="range"
            aria-label="Anteil"
            value={amount}
            onChange={e => setAmount(Number(e.target.value))}
            className="absolute inset-0 h-[9px] w-full appearance-none bg-transparent [&::-webkit-slider-thumb]:size-2 [&::-webkit-slider-thumb]:appearance-none [&::-webkit-slider-thumb]:rounded-full [&::-webkit-slider-thumb]:border-2 [&::-webkit-slider-thumb]:border-[#e8e8ea] [&::-webkit-slider-thumb]:bg-[#0d0e11]"
          />
        </div>
        <div className="flex justify-between text-[8px] leading-4">
          {['0 %', '25 %', '50 %', '75 %', '100 %'].map(stop => <span key={stop}>{stop}</span>)}
        </div>
        <label htmlFor="total" className="mt-3 font-medium leading-4 text-[#d8d8da]">Gesamt (USDC)</label>
        <input id="total" className="mt-1 h-[33px] rounded-[4px] bg-[#1c1d20] px-[7px] text-[11px] outline-none" />
        <p className="mt-[7px] leading-[18px]">Verfügbar <span className="font-medium text-[#e4e4e6]">0,00 USDC</span></p>
        <p className="leading-[18px]">Max. Kauf <span className="font-medium text-[#e4e4e6]">0,00000000 BTC</span></p>
        <label className="mt-[9px] flex items-center gap-[5px] border-t border-[#17181c] pt-[9px] font-medium leading-4 text-[#e4e4e6]">
          <input type="checkbox" className="size-[11px] appearance-none rounded-[2px] border border-[#55565a] checked:bg-[#31a650]" />
          <span className="border-b border-dashed border-[#55565a] leading-[14px]">TP/SL</span>
        </label>
        <button className="mt-[14px] h-[33px] rounded-full bg-[#31a650] text-[11px] font-semibold text-white">BTC kaufen</button>
        <p className="mt-[6px] leading-[18px]">Max. Preis <span className="font-medium text-[#e4e4e6]">USD63.552,4</span></p>
      </div>
    </form>
  );
};

const SpotMode = () => (
  <section className="text-[9px] text-[#85868a]">
    <div className="flex h-[38px] items-center justify-between border-b border-[#17181c] pl-[11px] pr-[6px] pt-[3px]">
      <h2 className="text-[11px] font-semibold text-[#ececee]">Spot-Modus</h2>
      <DragDots />
    </div>
    <dl className="mb-2 border-b border-[#17181c] pb-[10px] pl-[11px] pr-[13px] pt-2 leading-[21px]">
      {['Eigenkapital', 'Verwendet'].map(label => (
        <div key={label} className="flex justify-between">
          <dt>{label}</dt>
          <dd className="font-semibold text-[#ececee]">0,00 USDC</dd>
        </div>
      ))}
    </dl>
  </section>
);

const App: React.FC = () => (
  <div className="min-h-screen bg-[#f7f7f8] px-[25px] pb-[42px] pt-10 font-['Inter','Liberation_Sans',sans-serif]">
    <div className="rounded-[17px] bg-[#dededf] p-[3px] shadow-[0_1px_5px_rgba(0,0,0,0.25)]">
      <div className="overflow-hidden rounded-[14px] bg-[#0d0e11]">
        <Header />
        <Ticker />
        <main className="flex">
          <div className="flex min-w-0 flex-1 flex-col">
            <div className="flex">
              <section className="flex min-w-0 flex-1 flex-col">
                <ChartTabs />
                <ChartToolbar />
                <div className="flex">
                  <DrawingTools />
                  <PriceChart />
                </div>
              </section>
              <OrderBook />
            </div>
            <OrdersPanel />
          </div>
          <aside className="w-[228px] shrink-0 border-l-2 border-[#1a1b1f]">
            <OrderForm />
            <SpotMode />
          </aside>
        </main>
      </div>
    </div>
  </div>
);

export default App;
